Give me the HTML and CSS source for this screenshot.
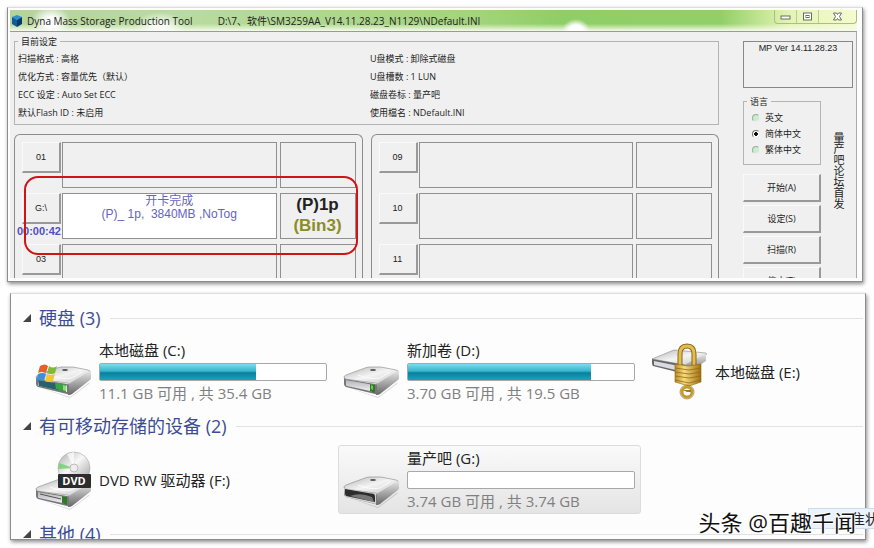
FILE: index.html
```html
<!DOCTYPE html>
<html lang="zh-CN">
<head>
    <meta charset="UTF-8">
    <meta name="viewport" content="width=device-width, initial-scale=1.0">
    <title>Dyna Mass Storage Production Tool</title>
    <link rel="stylesheet" href="styles.css">
</head>
<body>
    <!-- Production tool window -->
    <section class="window tool">
        <header class="titlebar">
            <svg class="app-icon" viewBox="0 0 12 14" aria-hidden="true">
                <path fill="#2f8fd0" d="M6 1l5 2-5 3-5-3z"/>
                <path fill="#0f5c9c" d="M1 3l5 3v7l-5-3z"/>
                <path fill="#083a6c" d="M11 3L6 6v7l5-3z"/>
            </svg>
            <span class="app-name">Dyna Mass Storage Production Tool</span>
            <span class="app-path">D:\7、软件\SM3259AA_V14.11.28.23_N1129\NDefault.INI</span>
            <div class="window-buttons">
                <button type="button" aria-label="最小化">
                    <svg viewBox="0 0 11 9"><rect x="1" y="4" width="9" height="3" fill="#fff" stroke="#667058"/></svg>
                </button>
                <button type="button" aria-label="最大化">
                    <svg viewBox="0 0 11 9"><rect x="1.500" y="1" width="8" height="7" fill="#fff" stroke="#667058"/><rect x="4" y="3.500" width="3" height="2" fill="#fff" stroke="#667058"/></svg>
                </button>
                <button type="button" class="close" aria-label="关闭">
                    <svg viewBox="0 0 11 9"><path d="M1.500 1h3l1 1.500 1-1.500h3L7.500 4.500 9.500 8h-3l-1-1.500-1 1.500h-3l2-3.500z" fill="#fff" stroke="#667058"/></svg>
                </button>
            </div>
        </header>

        <div class="client">
            <div class="main">
                <fieldset class="settings">
                    <legend>目前设定</legend>
                    <div class="settings-grid">
                        <span>扫描格式 : 高格</span><span>U盘模式 : 卸除式磁盘</span>
                        <span>优化方式 : 容量优先（默认）</span><span>U盘槽数 : 1 LUN</span>
                        <span>ECC 设定 : Auto Set ECC</span><span>磁盘卷标 : 量产吧</span>
                        <span>默认Flash ID : 未启用</span><span>使用檔名 : NDefault.INI</span>
                    </div>
                </fieldset>

                <div class="slot-groups">
                    <div class="slot-group">
                        <div class="slot">
                            <div class="port"><button type="button">01</button></div>
                            <div class="status"></div>
                            <div class="result"></div>
                        </div>
                        <div class="slot marked">
                            <div class="port"><button type="button">G:\</button><span class="time">00:00:42</span></div>
                            <div class="status done">
                                <span class="state">开卡完成</span>
                                <span class="detail">(P)_ 1p,&nbsp; 3840MB ,NoTog</span>
                            </div>
                            <div class="result">
                                <span>(P)1p</span>
                                <span class="bin">(Bin3)</span>
                            </div>
                        </div>
                        <div class="slot">
                            <div class="port"><button type="button">03</button></div>
                            <div class="status"></div>
                            <div class="result"></div>
                        </div>
                    </div>
                    <div class="slot-group">
                        <div class="slot">
                            <div class="port"><button type="button">09</button></div>
                            <div class="status"></div>
                            <div class="result"></div>
                        </div>
                        <div class="slot">
                            <div class="port"><button type="button">10</button></div>
                            <div class="status"></div>
                            <div class="result"></div>
                        </div>
                        <div class="slot">
                            <div class="port"><button type="button">11</button></div>
                            <div class="status"></div>
                            <div class="result"></div>
                        </div>
                    </div>
                </div>
            </div>

            <aside class="side">
                <div class="version">MP Ver 14.11.28.23</div>
                <div class="side-body">
                    <div class="controls">
                        <fieldset class="language">
                            <legend>语言</legend>
                            <label><input type="radio" name="lang">英文</label>
                            <label><input type="radio" name="lang" checked>简体中文</label>
                            <label><input type="radio" name="lang">繁体中文</label>
                        </fieldset>
                        <button type="button">开始(A)</button>
                        <button type="button">设定(S)</button>
                        <button type="button">扫描(R)</button>
                        <button type="button">停止(T)</button>
                    </div>
                    <div class="forum">量产吧论坛首发</div>
                </div>
            </aside>
        </div>
    </section>

    <!-- Explorer window -->
    <section class="window explorer">
        <svg class="defs" aria-hidden="true">
            <defs>
                <linearGradient id="top" x1="0" y1="0" x2="1" y2="1">
                    <stop offset="0" stop-color="#b4b4b4"/>
                    <stop offset=".5" stop-color="#f4f4f4"/>
                    <stop offset="1" stop-color="#c4c4c4"/>
                </linearGradient>
                <linearGradient id="edge" x1="0" y1="0" x2="0" y2="1">
                    <stop offset="0" stop-color="#e6e6e6"/>
                    <stop offset="1" stop-color="#666"/>
                </linearGradient>
                <linearGradient id="front" x1="0" y1="0" x2="0" y2="1">
                    <stop offset="0" stop-color="#b4b4b8"/>
                    <stop offset="1" stop-color="#f4f4f8"/>
                </linearGradient>
                <linearGradient id="gold" x1="0" y1="0" x2="1" y2="0">
                    <stop offset="0" stop-color="#b98a24"/>
                    <stop offset=".35" stop-color="#f6dc7c"/>
                    <stop offset="1" stop-color="#a06e10"/>
                </linearGradient>
                <linearGradient id="disc" x1="0" y1="0" x2="1" y2="1">
                    <stop offset="0" stop-color="#aaa"/>
                    <stop offset=".45" stop-color="#f8f8f8"/>
                    <stop offset="1" stop-color="#999"/>
                </linearGradient>
                <g id="drive">
                    <path fill="#000" opacity=".15" d="M3 45l32 10 20-15-1 2-19 14z"/>
                    <path fill="url(#top)" stroke="#888" stroke-width=".6" d="M1 35q0-1 2-2l19-7q2-1 5-1h11l15 3q3 1 2 2L36 41q-1 1-4 0L2 37q-1-1-1-2z"/>
                    <path fill="url(#edge)" d="M33 42q2 0 3-1l19-12 1 2v5q0 1-1 2L37 52q-1 1-4 1z"/>
                    <path fill="#777" d="M1 35l1 2 30 5q2 0 2 2v7q0 2-2 1L3 45q-2-1-2-3z"/>
                    <path fill="url(#front)" d="M3 38l28 5q1 0 1 1v6L4 44q-1 0-1-1z"/>
                    <path fill="none" stroke="#fff" opacity=".8" d="M15 33q12 5 22 3l10-6"/>
                    <ellipse cx="30" cy="28" rx="3" ry="1" fill="#555"/>
                </g>
            </defs>
        </svg>

        <div class="group">
            <h2><i class="arrow"></i>硬盘 (3)</h2>
            <div class="tiles">
                <div class="tile">
                    <svg viewBox="0 0 56 60" aria-hidden="true">
                        <use href="#drive"/>
                        <path fill="#28606c" d="M3 38l28 5v7L4 44z"/>
                        <path fill="#39a545" d="M20 41l11 2v7l-10-3z"/>
                        <path fill="#8be06c" d="M28 43l3 1v5l-3-1z"/>
                        <path fill="#e4602a" d="M5 24q5-3 8 0l-2 7q-4-2-8 0z"/>
                        <path fill="#7fb83a" d="M14 24q4 3 8 0l-2 7q-4 2-8 0z"/>
                        <path fill="#3f8fd8" d="M3 32q4-2 8 0l-2 7q-4-2-8 0z"/>
                        <path fill="#f3c530" d="M12 32q4 2 8 0l-2 7q-4 2-8 0z"/>
                    </svg>
                    <div class="info">
                        <div class="name">本地磁盘 (C:)</div>
                        <div class="bar"><div class="fill" style="width: 69%"></div></div>
                        <div class="space">11.1 GB 可用 , 共 35.4 GB</div>
                    </div>
                </div>
                <div class="tile">
                    <svg viewBox="0 0 56 60" aria-hidden="true">
                        <use href="#drive"/>
                        <path fill="#2f7a2a" d="M27 42l5 1v8l-5-2z"/>
                        <path fill="#6cc850" d="M28 43l2 1v4l-2-1z"/>
                    </svg>
                    <div class="info">
                        <div class="name">新加卷 (D:)</div>
                        <div class="bar"><div class="fill" style="width: 81%"></div></div>
                        <div class="space">3.70 GB 可用 , 共 19.5 GB</div>
                    </div>
                </div>
                <div class="tile">
                    <svg viewBox="0 0 56 60" aria-hidden="true">
                        <path fill="url(#top)" stroke="#888" stroke-width=".6" d="M1 17L23 8l32 3q1 1 0 2L34 23z"/>
                        <path fill="#666" d="M1 17l33 6v9L2 24q-1-1-1-3z"/>
                        <path fill="#dadae4" d="M3 19l30 6v5L3 23z"/>
                        <path fill="url(#edge)" d="M34 23l21-11v7L35 32z"/>
                        <path fill="none" stroke="#8a6414" stroke-width="5" d="M29 24V12q0-8 7-8t7 8v12"/>
                        <path fill="none" stroke="#e2bd50" stroke-width="3" d="M29 24V12q0-8 7-8t7 8v12"/>
                        <path fill="url(#gold)" stroke="#8a6414" stroke-width=".6" d="M24 22l13 2 13-2v18l-12 4-14-4z"/>
                        <path fill="none" stroke="#966a12" stroke-width=".8" d="M24 26l14 2 12-2M24 30l14 2 12-2M24 34l14 2 12-2M24 38l14 3 12-3"/>
                        <circle cx="36" cy="50" r="5" fill="#fff" stroke="#c59a30" stroke-width="3"/>
                        <path fill="#a67818" d="M32 48h8v2h-4z"/>
                        <circle cx="36" cy="50" r="7" fill="none" stroke="#8a6414" stroke-width=".6"/>
                    </svg>
                    <div class="info">
                        <div class="name">本地磁盘 (E:)</div>
                    </div>
                </div>
            </div>
        </div>

        <div class="group">
            <h2><i class="arrow"></i>有可移动存储的设备 (2)</h2>
            <div class="tiles">
                <div class="tile">
                    <svg viewBox="0 0 56 60" aria-hidden="true">
                        <use href="#drive" y="4"/>
                        <path fill="none" stroke="#555" d="M5 44l21 5"/>
                        <path fill="#2f7a2a" d="M27 46l5 1v8l-5-2z"/>
                        <circle cx="39" cy="18" r="16" fill="url(#disc)" stroke="#aaa" stroke-width=".6"/>
                        <path fill="#6fd068" opacity=".8" d="M39 18L24 13l-1 6z"/>
                        <path fill="#fff" opacity=".7" d="M39 18L32 4l7-2z"/>
                        <circle cx="39" cy="18" r="4" fill="#eee" stroke="#bbb"/>
                        <rect x="23" y="24" width="33" height="14" rx="1" fill="#2c2c2c"/>
                        <text x="39" y="35" class="disc-label">DVD</text>
                    </svg>
                    <div class="info">
                        <div class="name">DVD RW 驱动器 (F:)</div>
                    </div>
                </div>
                <div class="tile selected">
                    <svg viewBox="0 0 56 60" aria-hidden="true">
                        <use href="#drive" y="2"/>
                        <path fill="#d0d0d0" d="M1 38l32 6v10L2 47z"/>
                        <path fill="#2c2c2c" d="M2 39l29 5q1 1 1 3v5L3 46q-1-1-1-3z"/>
                        <path fill="#777" d="M7 46q10-4 22 1l2 5z"/>
                    </svg>
                    <div class="info">
                        <div class="name">量产吧 (G:)</div>
                        <div class="bar"></div>
                        <div class="space">3.74 GB 可用 , 共 3.74 GB</div>
                    </div>
                </div>
            </div>
        </div>

        <div class="group">
            <h2><i class="arrow"></i>其他 (4)</h2>
        </div>
    </section>

    <div class="tag">隹状</div>
    <div class="watermark">头条 @百趣千闻</div>
</body>
</html>
```

FILE: styles.css
```css
* {
    box-sizing: border-box;
}

body {
    display: flex;
    flex-direction: column;
    gap: 11px;
    height: 100vh;
    margin: 0;
    padding: 7px 8px 8px 7px;
    overflow: hidden;
    position: relative;
    background: #fff;
    color: #222;
    font-family: "Open Sans", "Noto Sans CJK SC", sans-serif;
}

.window {
    min-height: 0;
    overflow: hidden;
    border: 1px solid #8c8c8c;
    border-top-color: #ddd;
    box-shadow: 1px 2px 4px rgba(0, 0, 0, 0.45);
}

fieldset {
    margin: 0;
    min-width: 0;
    border: 1px solid #b4b4b4;
}

legend {
    padding: 0 3px;
    line-height: 11px;
}

/* production tool */
.tool {
    flex: 268 1 0;
    display: flex;
    flex-direction: column;
    margin-right: 3px;
    padding: 2px 5px 3px 2px;
    background: #fdfdfd;
    font-size: 9px;
}

.titlebar {
    display: flex;
    align-items: center;
    height: 21px;
    flex-shrink: 0;
    padding-left: 1px;
    font-size: 10px;
    white-space: nowrap;
    background:
        radial-gradient(ellipse 20px 16px at 41px 12px, #fff 30%, transparent),
        radial-gradient(ellipse 26px 14px at 150px 16px, rgba(255, 255, 255, 0.9) 20%, transparent),
        radial-gradient(ellipse 14px 12px at 566px 21px, #fff 50%, transparent),
        linear-gradient(transparent 65%, #f4fbe8),
        linear-gradient(90deg, #b5d49a, #b9dba0 20%, #a3d47c 55%, #8fce66 65%, #93cf69 84%, #e4f4b4 92%, #f6fbd0);
}

.app-icon {
    width: 12px;
    height: 14px;
    margin-right: 4px;
}

.app-path {
    margin-left: 25px;
}

.window-buttons {
    display: flex;
    align-self: flex-start;
    margin-left: auto;
    border: 1px solid #a9bf86;
    border-top: 0;
    border-radius: 0 0 4px 4px;
}

.window-buttons button {
    display: flex;
    align-items: center;
    justify-content: center;
    width: 22px;
    height: 13px;
    padding: 0;
    border: 0;
    border-right: 1px solid #b9cc93;
    background: transparent;
}

.window-buttons .close {
    width: 37px;
    border-right: 0;
}

.window-buttons svg {
    width: 11px;
    height: 9px;
}

.client {
    flex: 1;
    display: flex;
    gap: 24px;
    min-height: 0;
    padding: 4px 3px 0 4px;
    overflow: hidden;
    border-top: 1px solid #9a9a9a;
    border-right: 1px solid #aaa;
    background: #f0f0f0;
}

.main {
    flex: 1;
    min-width: 0;
}

.settings {
    padding: 3px 0 2px 3px;
}

.settings-grid {
    display: grid;
    grid-template-columns: 1fr 1fr;
    column-gap: 4px;
    line-height: 18px;
    white-space: nowrap;
}

.slot-groups {
    display: grid;
    grid-template-columns: 1fr 1fr;
    gap: 8px;
    margin-top: 9px;
}

.slot-group {
    display: flex;
    flex-direction: column;
    gap: 5px;
    padding: 7px 6px 0;
    border: 1px solid #8c8c8c;
    border-bottom: 0;
    border-radius: 6px 6px 0 0;
}

.slot {
    display: flex;
    gap: 1px;
    height: 46px;
    position: relative;
}

.marked {
    z-index: 1;
}

.marked::after {
    content: "";
    position: absolute;
    inset: -17px -2px -16px 3px;
    border: 2px solid #d01414;
    border-radius: 14px;
}

.port {
    display: flex;
    flex-direction: column;
    align-items: flex-end;
    width: 40px;
}

button {
    color: inherit;
    font: inherit;
}

.port button,
.controls button {
    flex-shrink: 0;
    padding: 0;
    border: 1px solid #fafafa;
    border-right: 2px solid #999;
    border-bottom: 2px solid #999;
    background: #f0f0f0;
}

.port button {
    width: 39px;
    height: 31px;
    font-family: "Liberation Sans", sans-serif;
}

.time {
    color: #5050c0;
    font: bold 11px/14px "Liberation Sans", sans-serif;
}

.status,
.result {
    display: flex;
    flex-direction: column;
    align-items: center;
    border: 1px solid #909090;
    font-family: "Liberation Sans", "Noto Sans CJK SC", sans-serif;
}

.status {
    flex: 1;
}

.result {
    width: 76px;
    margin-left: 2px;
    font-size: 17px;
    font-weight: bold;
    line-height: 21px;
}

.done {
    padding-top: 1px;
    background: #fff;
    color: #6464c0;
    font-size: 12px;
    line-height: 13px;
}

.bin {
    color: #8c8c28;
}

.side {
    width: 110px;
}

.version {
    height: 47px;
    margin-top: 5px;
    border: 1px solid #888;
    font-family: "Liberation Sans", sans-serif;
    line-height: 13px;
    text-align: center;
}

.side-body {
    display: flex;
    gap: 11px;
    margin-top: 8px;
}

.controls {
    display: flex;
    flex-direction: column;
    gap: 3px;
    width: 78px;
}

.language {
    margin-bottom: 6px;
    padding: 3px 0 6px 3px;
}

.language label {
    display: flex;
    align-items: center;
    gap: 5px;
    padding-left: 5px;
    line-height: 16px;
}

.language input {
    appearance: none;
    width: 8px;
    height: 8px;
    margin: 0;
    border: 1px solid #9ab09a;
    border-right-color: #eee;
    border-bottom-color: #eee;
    border-radius: 50%;
    background: #c9ecce;
}

.language input:checked {
    border-color: #777 #eee #eee #777;
    background: radial-gradient(#111 40%, #fff 50%);
}

.controls button {
    height: 28px;
}

.forum {
    padding-top: 36px;
    font-size: 11px;
    line-height: 12px;
    writing-mode: vertical-rl;
}

/* explorer */
.explorer {
    flex: 233 1 0;
    margin-left: 3px;
    padding: 12px 2px 0 12px;
    background: #fdfdfd;
}

.defs {
    position: absolute;
    width: 0;
    height: 0;
}

.group {
    margin-bottom: 8px;
}

.group h2 {
    display: flex;
    align-items: center;
    margin: 0 0 7px;
    color: #3c4c94;
    font-size: 18px;
    font-weight: normal;
    line-height: 24px;
    white-space: nowrap;
}

.group h2::after {
    content: "";
    flex: 1;
    height: 1px;
    margin-left: 9px;
    background: #e2e2e2;
}

.arrow {
    margin-right: 8px;
    border-left: 8px solid transparent;
    border-bottom: 8px solid #444;
}

.tiles {
    display: grid;
    grid-template-columns: repeat(3, 303px);
    gap: 5px;
    padding-left: 7px;
}

.tile {
    display: flex;
    align-items: center;
    gap: 8px;
    height: 69px;
    padding: 0 5px 0 4px;
    border: 1px solid transparent;
    border-radius: 3px;
}

.selected {
    border-color: #dcdcdc;
    background: linear-gradient(#fafafa, #e4e4e4);
}

.tile svg {
    width: 56px;
    height: 60px;
}

.disc-label {
    fill: #fff;
    font: bold 11px "Open Sans", sans-serif;
    text-anchor: middle;
}

.info {
    flex: 1;
    font-size: 15px;
    line-height: 22px;
    white-space: nowrap;
}

.bar {
    height: 18px;
    margin: 2px 0 1px;
    border: 1px solid #a8a8a8;
    border-radius: 2px;
    background: #fff;
}

.fill {
    height: 100%;
    background: linear-gradient(#7edcec, #35b4cc 45%, #0a7f9c 55%, #1aa3bb);
}

.space {
    color: #808080;
}

.tag {
    position: absolute;
    right: 0;
    bottom: 19px;
    width: 66px;
    height: 21px;
    overflow: hidden;
    padding-left: 42px;
    border: 1px solid #cdddf0;
    border-right: 0;
    background: #eaf2fb;
    font-size: 14px;
    line-height: 19px;
    white-space: nowrap;
}

.watermark {
    position: absolute;
    right: 18px;
    bottom: 10px;
    color: #111;
    font-size: 22px;
    line-height: 32px;
    text-shadow: -1px -1px 0 #fff, 1px 1px 0 #fff;
    white-space: nowrap;
}
```
